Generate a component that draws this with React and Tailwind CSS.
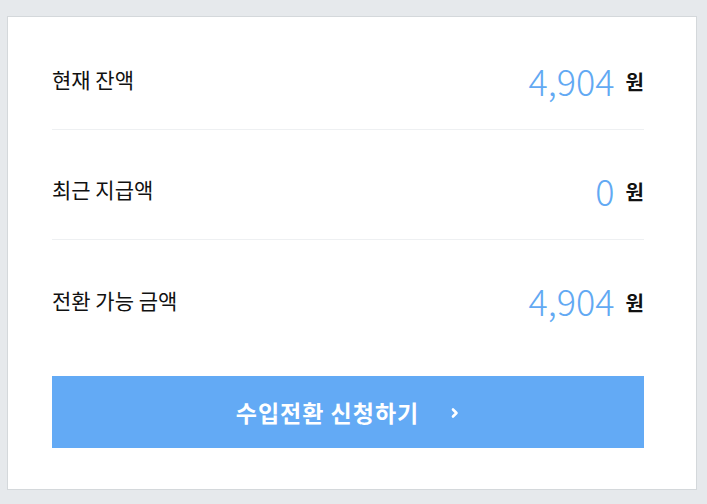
import React from 'react';

const font = { fontFamily: '"Noto Sans CJK KR", "Noto Sans", sans-serif' };

const rows = [
  { label: '현재 잔액', amount: '4,904' },
  { label: '최근 지급액', amount: '0' },
  { label: '전환 가능 금액', amount: '4,904' },
];

const App = () => {
  return (
    <div className="min-h-[504px] w-[707px] bg-[#e6e9ec] pt-[16px] pl-[7px]" style={font}>
      <div className="w-[690px] bg-white border border-[#d4d8db] pt-[3px] pl-[44px] pr-[52px] pb-[41px]">
        {/* Balance rows */}
        {rows.map((row, i) => (
          <div
            key={row.label}
            className={`flex h-[110px] items-center justify-between pt-[10px] ${
              i < rows.length - 1 ? 'border-b border-[#eef0f2]' : ''
            }`}
          >
            <span className="text-[21px] leading-none text-[#111]">{row.label}</span>
            <div className="flex items-center">
              <span className="text-[36px] font-light leading-none text-[#62a9f3]">{row.amount}</span>
              <span className="ml-[11px] mt-[5px] text-[20px] font-bold leading-none text-[#111]">원</span>
            </div>
          </div>
        ))}

        {/* Action button */}
        <button className="mt-[26px] flex h-[72px] w-full items-center justify-center bg-[#63aaf5] text-white">
          <span className="text-[23px] font-bold tracking-[1px]">수입전환 신청하기</span>
          <svg className="ml-[31px] mt-[2px]" width="10" height="12" viewBox="0 0 10 12" fill="none">
            <path d="M3 2.5 L6.5 6 L3 9.5" stroke="white" strokeWidth="2.6" strokeLinecap="round" strokeLinejoin="round" />
          </svg>
        </button>
      </div>
    </div>
  );
};

export default App;
